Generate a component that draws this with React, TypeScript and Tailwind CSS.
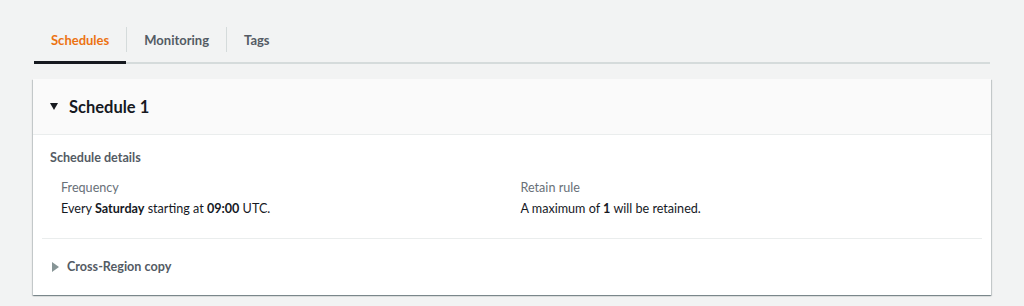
import React from 'react'

const font = { fontFamily: 'Lato, "Open Sans", Arial, sans-serif' }

// ── Tabs ──────────────────────────────────────────────────────────────────────
function Tabs() {
  const tabs = ['Schedules', 'Monitoring', 'Tags']
  return (
    <div className="flex mx-[34px] border-b-2 border-[#d5dbdb] h-[64px] items-stretch">
      {tabs.map((t, i) => (
        <div key={t} className="flex items-stretch">
          {i > 0 && <div className="w-px bg-[#d5dbdb] mt-[27px] mb-[10px]" />}
          <div
            className={
              'pt-[30px] leading-[20px] px-[17px] text-[13px] font-bold -mb-[2px] border-b-[3px] ' +
              (i === 0 ? 'text-[#ec7211] border-[#16191f]' : 'text-[#545b64] border-transparent')
            }
          >
            {t}
          </div>
        </div>
      ))}
    </div>
  )
}

// ── Schedule card ─────────────────────────────────────────────────────────────
function ScheduleCard() {
  return (
    <div className="mx-[33px] mt-[15px] bg-white shadow-[0_1px_1px_0_rgba(0,28,36,0.3),1px_1px_1px_0_rgba(0,28,36,0.15),-1px_1px_1px_0_rgba(0,28,36,0.15)]">
      <div className="h-[56px] bg-[#fafafa] border-b border-[#eaeded] flex items-center pl-[17px] gap-[11px]">
        <svg width="8" height="7" viewBox="0 0 8 7">
          <path d="M0 0 L8 0 L4 7 Z" fill="#16191f" />
        </svg>
        <span className="text-[16.5px] leading-[24px] font-bold text-[#16191f]">Schedule 1</span>
      </div>
      <div className="px-[17px] pt-[13px] text-[12.6px] leading-[20px]">
        <div className="font-bold text-[#545b64]">Schedule details</div>
        <div className="grid grid-cols-2 pl-[11px] pt-[10px] pb-[19px]">
          <div>
            <div className="text-[#687078]">Frequency</div>
            <div className="text-[#16191f] mt-px">
              Every <b>Saturday</b> starting at <b>09:00</b> UTC.
            </div>
          </div>
          <div className="pl-[3px]">
            <div className="text-[#687078]">Retain rule</div>
            <div className="text-[#16191f] mt-px">
              A maximum of <b>1</b> will be retained.
            </div>
          </div>
        </div>
      </div>
      <div className="mx-[9px] border-t border-[#eaeded]" />
      <div className="h-[56px] flex items-center pl-[19px] gap-[8px]">
        <svg width="7" height="10" viewBox="0 0 7 10">
          <path d="M0 0 L7 5 L0 10 Z" fill="#879596" />
        </svg>
        <span className="text-[12.6px] leading-[20px] font-bold text-[#545b64]">Cross-Region copy</span>
      </div>
    </div>
  )
}

export default function App() {
  return (
    <div className="w-[1024px] h-[306px] bg-[#f2f3f3] overflow-hidden" style={font}>
      <Tabs />
      <ScheduleCard />
    </div>
  )
}
